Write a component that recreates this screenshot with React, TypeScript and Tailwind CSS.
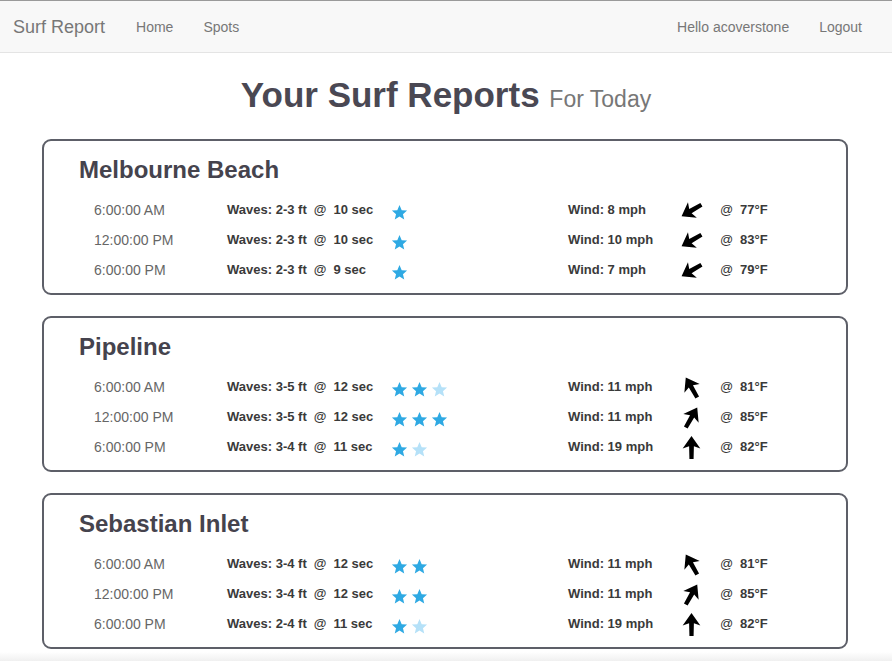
import React from 'react';

type Row = {
  time: string;
  waves: string;
  period: string;
  stars: number;
  faded: number;
  wind: string;
  dir: number;
  temp: string;
};

type Spot = { name: string; rows: Row[] };

const spots: Spot[] = [
  {
    name: 'Melbourne Beach',
    rows: [
      { time: '6:00:00 AM', waves: '2-3 ft', period: '10 sec', stars: 1, faded: 0, wind: '8 mph', dir: 240, temp: '77°F' },
      { time: '12:00:00 PM', waves: '2-3 ft', period: '10 sec', stars: 1, faded: 0, wind: '10 mph', dir: 240, temp: '83°F' },
      { time: '6:00:00 PM', waves: '2-3 ft', period: '9 sec', stars: 1, faded: 0, wind: '7 mph', dir: 240, temp: '79°F' },
    ],
  },
  {
    name: 'Pipeline',
    rows: [
      { time: '6:00:00 AM', waves: '3-5 ft', period: '12 sec', stars: 2, faded: 1, wind: '11 mph', dir: 330, temp: '81°F' },
      { time: '12:00:00 PM', waves: '3-5 ft', period: '12 sec', stars: 3, faded: 0, wind: '11 mph', dir: 30, temp: '85°F' },
      { time: '6:00:00 PM', waves: '3-4 ft', period: '11 sec', stars: 1, faded: 1, wind: '19 mph', dir: 0, temp: '82°F' },
    ],
  },
  {
    name: 'Sebastian Inlet',
    rows: [
      { time: '6:00:00 AM', waves: '3-4 ft', period: '12 sec', stars: 2, faded: 0, wind: '11 mph', dir: 330, temp: '81°F' },
      { time: '12:00:00 PM', waves: '3-4 ft', period: '12 sec', stars: 2, faded: 0, wind: '11 mph', dir: 30, temp: '85°F' },
      { time: '6:00:00 PM', waves: '2-4 ft', period: '11 sec', stars: 1, faded: 1, wind: '19 mph', dir: 0, temp: '82°F' },
    ],
  },
];

function Star({ faded }: { faded?: boolean }) {
  return (
    <svg width="17" height="17" viewBox="0 0 24 24" className={faded ? 'fill-[#b5e1f8]' : 'fill-[#2ea9e3]'}>
      <path d="M12 1.5l3.1 7.2 7.6.6-5.8 5 1.8 7.6L12 17.8l-6.7 4.1 1.8-7.6-5.8-5 7.6-.6z" />
    </svg>
  );
}

function Arrow({ deg }: { deg: number }) {
  return (
    <svg width="25" height="25" viewBox="0 0 24 24" style={{ transform: `rotate(${deg}deg)` }}>
      <path d="M12 1L20.5 13L14.3 10.8L14 23H10L9.7 10.8L3.5 13Z" fill="#000" />
    </svg>
  );
}

function ReportRow({ row }: { row: Row }) {
  return (
    <div className="flex items-center h-[30px] text-[13px]">
      <div className="w-[133px] text-[14px] text-[#666]">{row.time}</div>
      <div className="w-[164px] flex items-center gap-[7px] font-bold text-[#3a3a3a]">
        <span>Waves: {row.waves}</span>
        <span>@</span>
        <span>{row.period}</span>
      </div>
      <div className="w-[177px] flex items-center gap-[3px] pt-[4px]">
        {Array.from({ length: row.stars }).map((_, i) => (
          <Star key={i} />
        ))}
        {Array.from({ length: row.faded }).map((_, i) => (
          <Star key={'f' + i} faded />
        ))}
      </div>
      <div className="w-[111px] font-bold text-[#3a3a3a]">Wind: {row.wind}</div>
      <div className="w-[41px] flex items-center">
        <Arrow deg={row.dir} />
      </div>
      <div className="w-[20px] text-[#333]">@</div>
      <div className="font-bold text-[#3a3a3a]">{row.temp}</div>
    </div>
  );
}

export default function App() {
  return (
    <div className="min-h-screen bg-white font-['Liberation_Sans',Arial,sans-serif]">
      <nav className="h-[53px] pt-[2px] border-t border-[#9a9a9a] border-b border-b-[#e4e4e4] bg-[#f8f8f8] flex items-center justify-between text-[14px] text-[#777]">
        <div className="flex items-center">
          <span className="ml-[13px] text-[18px]">Surf Report</span>
          <span className="ml-[31px]">Home</span>
          <span className="ml-[30px]">Spots</span>
        </div>
        <div className="flex items-center mr-[30px]">
          <span>Hello acoverstone</span>
          <span className="ml-[30px]">Logout</span>
        </div>
      </nav>

      <h1 className="text-center mt-[20px] mb-[18px] leading-[44px] text-[35px] font-bold text-[#4a4853]">
        Your Surf Reports <span className="text-[23px] font-normal text-[#777]">For Today</span>
      </h1>

      <div className="flex flex-col gap-[21px] ml-[42px] w-[806px]">
        {spots.map(spot => (
          <div key={spot.name} className="h-[156px] border-2 border-[#5d5f68] rounded-[9px] pl-[35px] pt-[13px]">
            <h2 className="text-[24px] font-bold text-[#45434d] leading-[32px] mb-[9px]">{spot.name}</h2>
            <div className="pl-[15px]">
              {spot.rows.map((row, i) => (
                <ReportRow key={i} row={row} />
              ))}
            </div>
          </div>
        ))}
      </div>
      <div className="h-[12px] mt-[3px] bg-gradient-to-b from-white to-[#ebebeb]" />
    </div>
  );
}
